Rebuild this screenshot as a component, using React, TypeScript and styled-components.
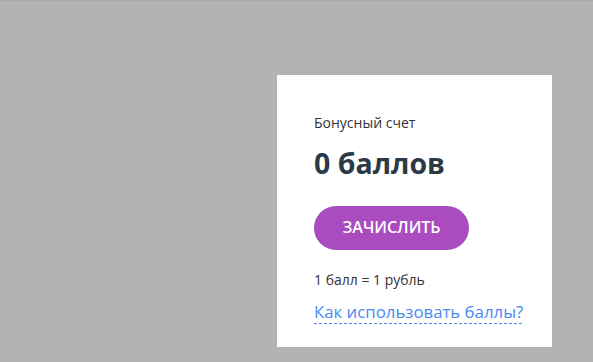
import React from 'react';
import styled, { createGlobalStyle } from 'styled-components';

const GlobalStyle = createGlobalStyle`
  html, body {
    margin: 0;
    padding: 0;
    background: #b3b3b3;
  }
  body {
    font-family: "Open Sans", "Liberation Sans", sans-serif;
    height: 362px;
    overflow: hidden;
  }
`;

interface Props {}

const App: React.FC<Props> = () => {
  return (
    <>
      <GlobalStyle />
      <Page>
        <Card>
          <Label>Бонусный счет</Label>
          <Balance>0 баллов</Balance>
          <CreditButton>Зачислить</CreditButton>
          <Rate>1 балл = 1 рубль</Rate>
          <HelpLink href="#">Как использовать баллы?</HelpLink>
        </Card>
      </Page>
    </>
  );
};

const Page = styled.div`
  display: flex;
  justify-content: flex-end;
  padding: 75px 41px 0 0;
  box-shadow: inset 0 1px 1px rgba(0, 0, 0, 0.06);
  height: 362px;
  box-sizing: border-box;
`;

const Card = styled.div`
  width: 275px;
  height: 272px;
  box-sizing: border-box;
  background: #fff;
  padding: 38px 0 0 37px;
  display: flex;
  flex-direction: column;
  align-items: flex-start;
`;

const Label = styled.div`
  font-size: 14px;
  line-height: 20px;
  color: #333;
`;

const Balance = styled.div`
  margin-top: 12px;
  font-size: 28.5px;
  line-height: 36px;
  font-weight: 700;
  color: #2c3a47;
`;

const CreditButton = styled.button`
  margin-top: 25px;
  width: 155px;
  height: 44px;
  padding: 0 0 2px;
  border: none;
  border-radius: 22px;
  background: #ab4bc0;
  color: #fff;
  font-family: inherit;
  font-size: 16px;
  font-weight: 600;
  text-transform: uppercase;
  cursor: pointer;
`;

const Rate = styled.div`
  margin-top: 20px;
  font-size: 14px;
  line-height: 20px;
  color: #333;
`;

const HelpLink = styled.a`
  margin-top: 11px;
  padding-bottom: 1px;
  font-size: 16.8px;
  line-height: 22px;
  font-weight: 500;
  color: #4a8af0;
  text-decoration: none;
  background: repeating-linear-gradient(to right, #4a8af0 0 3px, transparent 3px 5px) left bottom / 100% 1px no-repeat;
`;

export default App;
